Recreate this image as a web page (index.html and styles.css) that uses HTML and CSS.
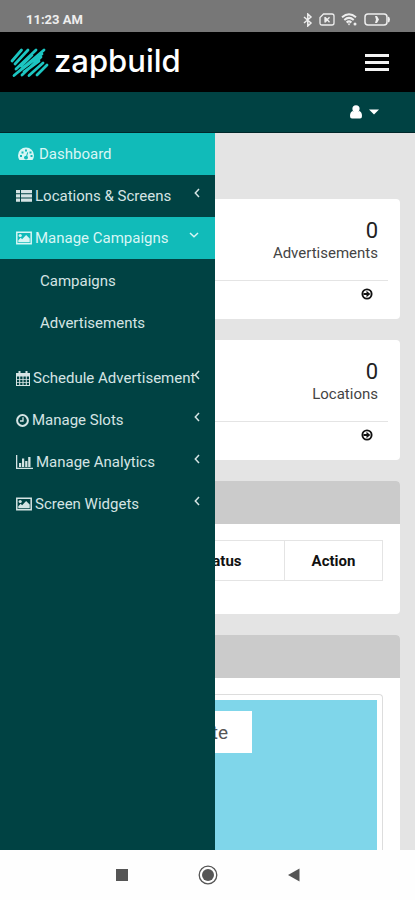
FILE: index.html
```html
<!DOCTYPE html>
<html lang="en">
<head>
<meta charset="utf-8">
<meta name="viewport" content="width=device-width, initial-scale=1">
<title>zapbuild dashboard</title>
<link rel="stylesheet" href="styles.css">
</head>
<body>
<svg class="defs" aria-hidden="true">
  <symbol id="image" viewBox="0 0 16 14"><path fill="none" stroke="currentColor" stroke-width="1.5" d="M.8 1.2h14.4v11.6H.8z"/><circle cx="4.200" cy="4.500" r="1.600"/><path d="M2.300 11.300V9.200l2.400-2.400 1.400 1.400 4-4.200 3.600 3.600v3.700z"/></symbol>
  <symbol id="left" viewBox="0 0 6 10"><path fill="none" stroke="currentColor" stroke-width="1.5" d="M5 1 1.300 5 5 9"/></symbol>
  <symbol id="go" viewBox="0 0 12 12"><circle cx="6" cy="6" r="4.600" fill="none" stroke="currentColor" stroke-width="1.900"/><path d="M2.500 5H5.500V2.800L9.300 6 5.500 9.200V7h-3z"/></symbol>
</svg>

<div class="status">
  <span>11:23 AM</span>
  <div class="status-icons">
    <svg width="10" height="14" viewBox="0 0 10 14"><path fill="none" stroke="currentColor" stroke-width="1.500" d="m1 4 7 6-3.200 3V1L8 4l-7 6"/></svg>
    <svg width="16" height="13" viewBox="0 0 16 13"><path fill="none" stroke="currentColor" stroke-width="1.300" d="M4.500 1H13q2 0 2 2v7q0 2-2 2H3q-2 0-2-2V4.500zM6 4.200l4.500 5M10.500 4.200 6 9.200M6 4v5.500"/></svg>
    <svg width="17" height="13" viewBox="0 0 17 13"><g fill="none" stroke="currentColor" stroke-width="2"><path d="M1 4.200q7-6 14 0M3.300 7q4.700-4.200 9.400 0M5.600 9.500q2.400-2.200 4.800 0"/></g><path d="m6.500 10.500 1.500 2 1.500-2z"/><circle cx="14" cy="11" r="1.500"/></svg>
    <svg width="27" height="13" viewBox="0 0 27 13"><rect x="1" y="1" width="22" height="11" rx="3" fill="none" stroke="currentColor" stroke-width="1.500"/><path d="M24 3.500q2 .5 2 3t-2 3zM11 3h2l2 3.500-2 3.500h-2l1-3.500z"/></svg>
  </div>
</div>

<header class="brandbar">
  <a class="brand" href="#">
    <svg width="39" height="32" viewBox="0 0 39 32"><path fill="none" stroke="currentColor" stroke-width="2.800" stroke-linecap="round" stroke-linejoin="round" d="M2 15 11.500 4M5 18 18 4M6 23 26 4M11 20 22 9M4 29.500 34 4M7 27 32 8M12 29 31 11M14 26 29 15M19 29.500 33 17M27 29 37 19"/></svg>
    <span>zapbuild</span>
  </a>
  <button class="menu" aria-label="Toggle navigation"><i></i><i></i><i></i></button>
</header>

<div class="userbar">
  <button class="user" aria-label="Account">
    <svg width="12" height="14" viewBox="0 0 12 14"><circle cx="6" cy="3.800" r="3.600"/><path d="M2.600 6Q6 8 9.400 6q2.600 1 2.600 5 0 2.600-2 2.600H2q-2 0-2-2.600 0-4 2.600-5z"/></svg>
    <svg width="10" height="6" viewBox="0 0 10 6"><path d="M0 .5h10L5 5.500z"/></svg>
  </button>
</div>

<div class="body">
  <main class="content">
    <section class="card">
      <div class="figures"><strong>0</strong><span>Advertisements</span></div>
      <a class="more" href="#" aria-label="View advertisements"><svg width="12" height="12"><use href="#go"/></svg></a>
    </section>
    <section class="card">
      <div class="figures"><strong>0</strong><span>Locations</span></div>
      <a class="more" href="#" aria-label="View locations"><svg width="12" height="12"><use href="#go"/></svg></a>
    </section>
    <section class="panel">
      <div class="panel-head"></div>
      <div class="panel-body">
        <table>
          <thead><tr><th class="name"></th><th class="state">Status</th><th class="action">Action</th></tr></thead>
        </table>
      </div>
    </section>
    <section class="panel grow">
      <div class="panel-head"></div>
      <div class="panel-body map-body">
        <div class="frame"><div class="map">
          <button class="map-type">Satellite</button>
        </div></div>
      </div>
    </section>
  </main>

  <nav class="sidebar">
    <a class="item active dash" href="#"><svg width="16" height="14" viewBox="0 0 16 14"><path fill-rule="evenodd" d="M1.500 13Q0 11 0 8.500a8 8 0 0 1 16 0Q16 11 14.500 13zM6 10.500a2 2 0 0 0 4 0q0-1-.8-1.500l1-3.500-1-.2-1 3.500Q6 8.800 6 10.500zM2 8v2h2V8zm1.500-3.500v2h2v-2zM7 2.500v2h2v-2zm4.500 2v2h2v-2zM12.500 8v2h2V8z"/></svg><span>Dashboard</span></a>
    <a class="item" href="#"><svg width="16" height="14" viewBox="0 0 16 14"><path d="M0 1h4v3.300H0zm5 0h11v3.300H5zM0 5.200h4v3.300H0zm5 0h11v3.300H5zM0 9.400h4v3.300H0zm5 0h11v3.300H5z"/></svg><span>Locations &amp; Screens</span><svg class="arrow" width="6" height="10"><use href="#left"/></svg></a>
    <a class="item active" href="#"><svg width="16" height="14"><use href="#image"/></svg><span>Manage Campaigns</span><svg class="arrow down" width="10" height="6" viewBox="0 0 10 6"><path fill="none" stroke="currentColor" stroke-width="1.500" d="m1 1 4 3.700L9 1"/></svg></a>
    <div class="sub">
      <a class="item" href="#">Campaigns</a>
      <a class="item" href="#">Advertisements</a>
    </div>
    <a class="item" href="#"><svg width="14" height="15" viewBox="0 0 14 15"><path fill-rule="evenodd" d="M0 2h2.500V0h2v2h5V0h2v2H14v13H0zm1 3.500V8h2.200V5.500zm3.200 0V8h2.300V5.500zm3.300 0V8h2.300V5.500zm3.300 0V8H13V5.500zM1 8.800V11h2.200V8.800zm3.200 0V11h2.300V8.800zm3.300 0V11h2.300V8.800zm3.300 0V11H13V8.800zM1 11.800V14h2.200v-2.200zm3.200 0V14h2.300v-2.200zm3.300 0V14h2.300v-2.200zm3.300 0V14H13v-2.200z"/></svg><span>Schedule Advertisement</span><svg class="arrow" width="6" height="10"><use href="#left"/></svg></a>
    <a class="item" href="#"><svg width="13" height="13" viewBox="0 0 13 13"><circle cx="6.500" cy="6.500" r="5.400" fill="none" stroke="currentColor" stroke-width="2"/><path fill="none" stroke="currentColor" stroke-width="1.300" d="M7 3.200V7H4"/></svg><span>Manage Slots</span><svg class="arrow" width="6" height="10"><use href="#left"/></svg></a>
    <a class="item" href="#"><svg width="17" height="14" viewBox="0 0 17 14"><path d="M0 0h1.300v12.700H17V14H0zM3 8h2.200v4H3zm3-4.500h2.200V12H6zM9.200 6h2.200v6H9.200zm3-4h2.300v10h-2.300z"/></svg><span>Manage Analytics</span><svg class="arrow" width="6" height="10"><use href="#left"/></svg></a>
    <a class="item" href="#"><svg width="16" height="14"><use href="#image"/></svg><span>Screen Widgets</span><svg class="arrow" width="6" height="10"><use href="#left"/></svg></a>
  </nav>
</div>

<footer class="keys">
  <button aria-label="Recent apps"><svg width="20" height="20" viewBox="0 0 20 20"><path d="M4 4h12v12H4z"/></svg></button>
  <button aria-label="Home"><svg width="20" height="20" viewBox="0 0 20 20"><circle cx="10" cy="10" r="8.800" fill="none" stroke="currentColor" stroke-width="1.300"/><circle cx="10" cy="10" r="6"/></svg></button>
  <button aria-label="Back"><svg width="20" height="20" viewBox="0 0 20 20"><path d="M15.500 3.500v13L4 10z"/></svg></button>
</footer>
</body>
</html>
```
FILE: styles.css
```css
* { box-sizing: border-box; }
body {
  margin: 0;
  height: 100vh;
  display: flex;
  flex-direction: column;
  overflow: hidden;
  font-family: Roboto, "Liberation Sans", sans-serif;
  font-size: 15px;
  color: #333;
  background: #e4e4e4;
}
button { border: 0; padding: 0; background: none; font: inherit; color: inherit; }
a { color: inherit; text-decoration: none; }
svg { fill: currentColor; flex: none; display: block; }
.defs { position: absolute; width: 0; height: 0; }

.status {
  height: 32px;
  padding: 7px 24px 0 26px;
  display: flex;
  justify-content: space-between;
  align-items: center;
  background: #777;
  color: #eee;
  font-size: 13px;
  font-weight: 700;
}
.status-icons { display: flex; align-items: center; gap: 6px; }

.brandbar {
  height: 60px;
  padding: 0 26px 0 10px;
  display: flex;
  align-items: center;
  justify-content: space-between;
  background: #000;
  color: #fff;
}
.brand {
  display: flex;
  align-items: center;
  gap: 5px;
  font-family: Inter, sans-serif;
  font-size: 31px;
  font-weight: 500;
  line-height: 36px;
}
.brand span { padding-bottom: 2px; }
.brand svg { color: #1cc6c2; }
.menu { display: flex; flex-direction: column; gap: 4px; width: 24px; }
.menu i { height: 3px; background: #f4f4f4; }

.userbar {
  height: 41px;
  padding: 0 36px;
  display: flex;
  justify-content: flex-end;
  align-items: center;
  background: #004243;
  border-bottom: 1px solid #00282a;
  color: #fff;
}
.user { display: flex; align-items: center; gap: 7px; }

.body { position: relative; flex: 1; min-height: 0; display: flex; }
.content {
  flex: 1;
  min-width: 0;
  padding: 66px 15px 0;
  display: flex;
  flex-direction: column;
  gap: 21px;
}
.card { background: #fff; border-radius: 4px; height: 120px; flex: none; padding: 0 12px; }
.figures {
  height: 82px;
  padding: 20px 10px 0;
  display: flex;
  flex-direction: column;
  align-items: flex-end;
  border-bottom: 1px solid #e4e4e4;
}
.figures strong { font-size: 22px; line-height: 24px; font-weight: 400; color: #222; }
.figures span { line-height: 20px; color: #444; }
.more { display: flex; justify-content: flex-end; padding: 7px 15px; color: #111; }

.panel { flex: none; background: #fff; border-radius: 4px; overflow: hidden; }
.panel-head { height: 43px; background: #cbcbcb; }
.panel-body { padding: 16px 17px 33px; }
table { width: 100%; border-collapse: collapse; table-layout: fixed; }
th { height: 40px; padding: 0; border: 1px solid #e4e4e4; font-weight: 700; color: #111; }
.name { width: 35%; }
.state { width: 37%; }
.action { width: 28%; }
.grow { flex: 1; display: flex; flex-direction: column; border-radius: 4px 4px 0 0; }
.map-body { flex: 1; display: flex; padding-bottom: 0; }
.frame { flex: 1; min-width: 0; display: flex; padding: 5px 5px 0; border: 1px solid #ddd; border-bottom: 0; border-radius: 4px 4px 0 0; }
.map { flex: 1; min-width: 0; padding: 11px 125px 0 11px; display: flex; align-items: flex-start; justify-content: flex-end; background: #7fd6ea; }
.map-type { height: 42px; padding: 0 24px; background: #fff; color: #555; font-size: 19px; }

.sidebar { position: absolute; top: 0; bottom: 0; left: 0; width: 215px; background: #004243; color: #d5e4e4; }
.item { height: 42px; padding: 0 15px 0 16px; display: flex; align-items: center; gap: 3px; white-space: nowrap; }
.item span { flex: 1; min-width: 0; }
.active { background: #11bbb9; color: #d8f6f5; }
.dash { padding-left: 18px; gap: 5px; }
.arrow { margin-bottom: 6px; }
.down { margin-right: 1px; }
.sub { padding: 1px 0 13px; }
.sub .item { padding-left: 40px; }

.keys { height: 50px; display: flex; justify-content: center; align-items: center; gap: 66px; background: #fefefe; color: #555; }
```
